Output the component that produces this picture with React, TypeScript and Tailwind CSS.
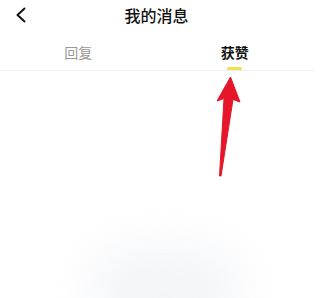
import React from "react";

const BackIcon = () => (
  <svg width="12" height="16" viewBox="0 0 12 16" fill="none">
    <polyline
      points="9.5,1.5 2.5,8 9.5,14.5"
      stroke="#111"
      strokeWidth="2"
      strokeLinecap="round"
      strokeLinejoin="round"
    />
  </svg>
);

const Arrow = () => (
  <svg
    className="absolute left-0 top-0 pointer-events-none"
    width="326"
    height="298"
    viewBox="0 0 326 298"
  >
    <polygon
      points="230.5,77 240,102 233,99.5 221,176 219.5,176 224,98.5 217,101"
      fill="#e5162a"
      stroke="#e5162a"
      strokeWidth="1"
      strokeLinejoin="round"
    />
  </svg>
);

const App = () => {
  return (
    <div
      className="relative w-[326px] h-[298px] overflow-hidden bg-white"
      style={{ fontFamily: '"Noto Sans CJK SC", "Noto Sans", sans-serif' }}
    >
      <div className="w-[313px]">
        <div className="grid grid-cols-[1fr_auto_1fr] items-center h-[30px]">
          <div className="pl-[15px] flex items-center">
            <BackIcon />
          </div>
          <div className="text-[16px] leading-[20px] font-medium text-[#111]">
            我的消息
          </div>
          <div />
        </div>

        <div className="grid grid-cols-2 border-b border-[#eeeeee]">
          <div className="flex flex-col items-center pt-[12px]">
            <span className="text-[14px] leading-[20px] text-[#999999]">
              回复
            </span>
            <div className="mt-[5px] h-[3px] w-[15px]" />
          </div>
          <div className="flex flex-col items-center pt-[12px]">
            <span className="text-[14px] leading-[20px] font-bold text-[#111]">
              获赞
            </span>
            <div className="mt-[5px] h-[3px] w-[15px] rounded-full bg-[#f3e04b]" />
          </div>
        </div>
      </div>

      <div className="absolute left-[90px] top-[250px] w-[150px] h-[80px] rounded-full bg-[#eef0f5] blur-xl opacity-70" />
      <Arrow />
    </div>
  );
};

export default App;
